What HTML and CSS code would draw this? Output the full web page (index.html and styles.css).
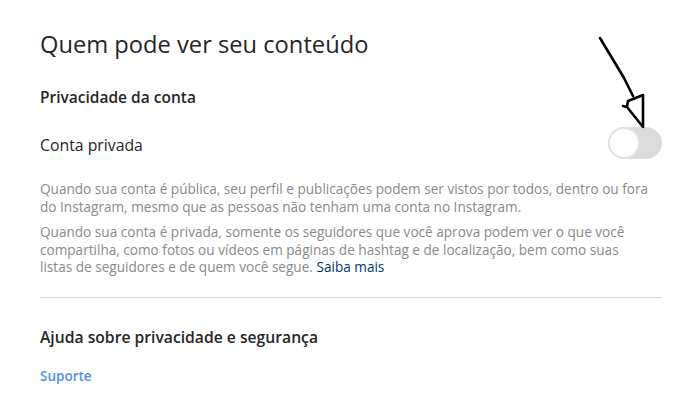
FILE: index.html
```html
<!DOCTYPE html>
<html lang="pt-BR">
<head>
<meta charset="utf-8">
<link rel="stylesheet" href="styles.css">
</head>
<body>
<main class="page">
  <h1 class="title">Quem pode ver seu conteúdo</h1>
  <h2 class="section">Privacidade da conta</h2>
  <div class="row">
    <span class="label">Conta privada</span>
    <span class="toggle"><span class="knob"></span></span>
  </div>
  <p class="desc">Quando sua conta é pública, seu perfil e publicações podem ser vistos por todos, dentro ou fora<br>do Instagram, mesmo que as pessoas não tenham uma conta no Instagram.</p>
  <p class="desc second">Quando sua conta é privada, somente os seguidores que você aprova podem ver o que você<br>compartilha, como fotos ou vídeos em páginas de hashtag e de localização, bem como suas<br>listas de seguidores e de quem você segue. <a class="more" href="#">Saiba mais</a></p>
  <hr class="divider">
  <h2 class="section help">Ajuda sobre privacidade e segurança</h2>
  <a class="link" href="#">Suporte</a>
</main>
<svg class="arrow" width="700" height="418" viewBox="0 0 700 418" aria-hidden="true">
  <path d="M600 38 L612 58 L624 78 L633 96" fill="none" stroke="#000" stroke-width="2.6" stroke-linecap="round" stroke-linejoin="round"/>
  <path d="M628 101 L643 95 L643 127 L627 107 L623 106 M628 101 L627 107" fill="none" stroke="#000" stroke-width="2.6" stroke-linecap="round" stroke-linejoin="round"/>
</svg>
</body>
</html>
```
FILE: styles.css
```css
html, body {
  margin: 0;
  padding: 0;
  background: #ffffff;
}
body {
  width: 700px;
  height: 418px;
  overflow: hidden;
  position: relative;
  font-family: "Open Sans", "Noto Sans", sans-serif;
  color: #262626;
}
.page {
  width: 622px;
  padding: 28px 0 0 40px;
  display: flex;
  flex-direction: column;
}
.title {
  margin: 0;
  font-size: 23.7px;
  font-weight: 400;
  line-height: 32px;
  color: #262626;
}
.section {
  margin: 27px 0 0 0;
  font-size: 15.5px;
  font-weight: 600;
  line-height: 20px;
  color: #262626;
}
.row {
  display: flex;
  align-items: center;
  justify-content: space-between;
  margin-top: 19px;
  height: 34px;
}
.label {
  font-size: 15.8px;
  line-height: 20px;
  color: #262626;
  position: relative;
  top: 2px;
}
.toggle {
  width: 54px;
  height: 32px;
  border-radius: 16px;
  background: #dbdbdb;
  display: flex;
  align-items: center;
  box-sizing: border-box;
}
.knob {
  width: 32px;
  height: 32px;
  border-radius: 50%;
  background: #ffffff;
  border: 2px solid #e3e3e3;
  box-sizing: border-box;
}
.desc {
  margin: 20px 0 0 0;
  font-size: 13.6px;
  line-height: 17.5px;
  color: #8a8a8a;
  white-space: nowrap;
}
.desc.second {
  margin-top: 8px;
}
.more {
  color: #00376b;
  text-decoration: none;
}
.divider {
  margin: 21px 0 0 0;
  border: 0;
  border-top: 1px solid #dbdbdb;
  height: 0;
}
.help {
  margin-top: 29px;
  font-size: 15.7px;
}
.link {
  margin-top: 20px;
  font-size: 13.5px;
  font-weight: 600;
  line-height: 18px;
  color: #4a94e6;
  text-decoration: none;
  align-self: flex-start;
}
.arrow {
  position: absolute;
  left: 0;
  top: 0;
  pointer-events: none;
}
```
